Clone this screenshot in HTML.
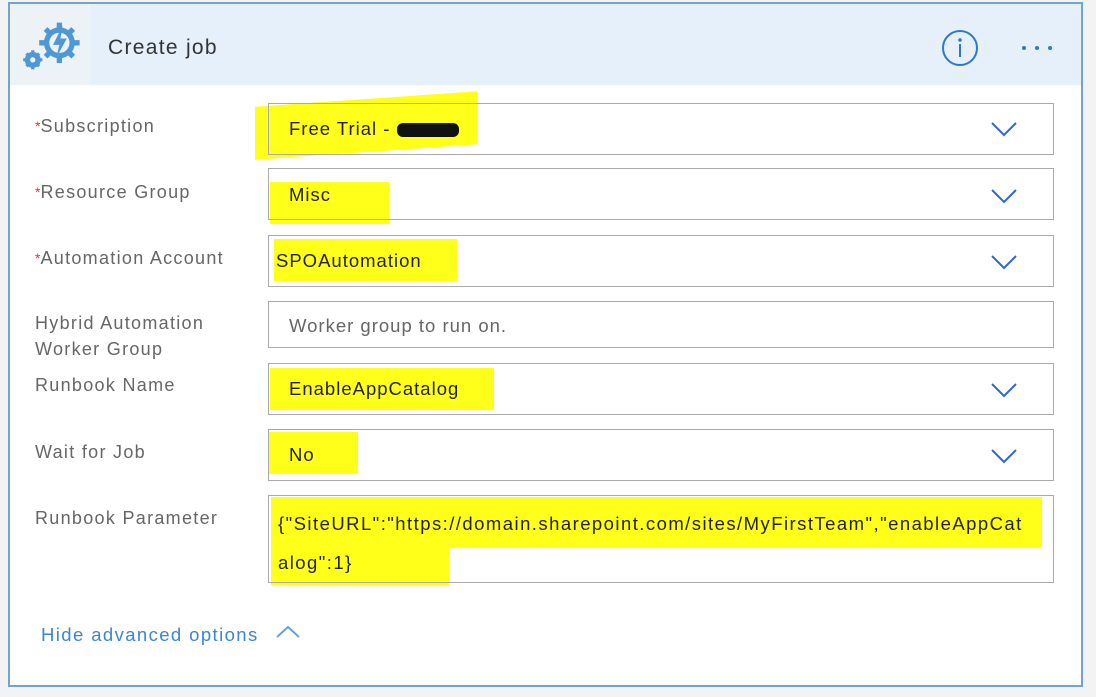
<!DOCTYPE html>
<html><head><style>
body{margin:0;width:1096px;height:697px;background:#f3f3f3;font-family:"Liberation Sans",sans-serif;position:relative;overflow:hidden}
.card{position:absolute;left:8px;top:2px;width:1071px;height:681px;border:2px solid #6fa4d6;background:#fff}
.hdr{position:absolute;left:0;top:0;width:1071px;height:81px;background:#e5f0fa}
.ic{position:absolute;left:0;top:0;width:80px;height:81px;background:#edf2f7}
.a{position:absolute}
.lab{position:absolute;left:25px;font-size:18px;letter-spacing:1.3px;color:#666;line-height:26px}
.req{color:#d33;font-size:14px;vertical-align:top;letter-spacing:0}
.box{position:absolute;left:258px;width:784px;border:1px solid #aaa;background:transparent}
.hl{position:absolute;background:#ffff1a}
.t{position:absolute;font-size:18.5px;letter-spacing:1px;color:#222;white-space:nowrap}
.chev{position:absolute;left:980px;width:28px;height:16px}
</style></head><body>
<div class="card">
 <div class="hdr"></div>
 <div class="ic"></div>
 <svg class="a" style="left:10px;top:14px" width="66" height="56" viewBox="0 0 62 50">
  <g fill="none" stroke="#4f98d6" stroke-width="5">
   <circle cx="37" cy="22" r="12"/>
   <circle cx="12" cy="38" r="5"/>
  </g>
  <g stroke="#4f98d6" stroke-width="5" stroke-linecap="butt">
   <path d="M37 3v5M37 36v5M18 22h5M51 22h5M24 9l3 3M47 32l3 3M50 9l-3 3M24 35l3-3"/>
   <path d="M12 29v3M12 44v3M3 38h3M18 38h3M6 32l2 2M16 42l2 2M18 32l-2 2M6 44l2-2" stroke-width="3"/>
  </g>
  <path d="M40 6l-9 18h6l-3 12 10-18h-6z" fill="#4f98d6"/>
 </svg>
 <div class="t" style="left:98px;top:32px;font-size:21px;letter-spacing:1.3px;color:#333">Create job</div>
 <svg class="a" style="left:930px;top:24px" width="40" height="40"><circle cx="20" cy="20" r="17" fill="none" stroke="#2f78c9" stroke-width="2"/><circle cx="20" cy="12" r="1.8" fill="#2f78c9"/><rect x="19" y="16" width="2" height="13" fill="#2f78c9"/></svg>
 <svg class="a" style="left:1010px;top:40px" width="40" height="8"><circle cx="4" cy="4" r="2" fill="#2f78c9"/><circle cx="17" cy="4" r="2" fill="#2f78c9"/><circle cx="30" cy="4" r="2" fill="#2f78c9"/></svg>

 <div class="hl" style="left:245px;top:95px;width:222px;height:53px;transform:skewY(-4deg)"></div>
 <div class="hl" style="left:260px;top:178px;width:119px;height:42px"></div>
 <div class="hl" style="left:264px;top:235px;width:183px;height:42px"></div>
 <div class="hl" style="left:260px;top:364px;width:224px;height:42px"></div>
 <div class="hl" style="left:258px;top:428px;width:90px;height:42px"></div>
 <div class="hl" style="left:261px;top:493px;width:771px;height:50px"></div>
 <div class="hl" style="left:261px;top:541px;width:178px;height:40px"></div>

 <div class="lab" style="top:109px"><span class="req">*</span>Subscription</div>
 <div class="box" style="top:99px;height:50px"></div>
 <div class="t" style="left:279px;top:114px">Free Trial - <span style="background:#111;border-radius:6px;display:inline-block;width:62px;height:14px;vertical-align:middle"></span></div>
 <svg class="chev" style="top:117px"><path d="M2 2l12 12 12-12" fill="none" stroke="#2f66d0" stroke-width="2"/></svg>

 <div class="lab" style="top:175px"><span class="req">*</span>Resource Group</div>
 <div class="box" style="top:164px;height:50px"></div>
 <div class="t" style="left:279px;top:180px">Misc</div>
 <svg class="chev" style="top:184px"><path d="M2 2l12 12 12-12" fill="none" stroke="#2f66d0" stroke-width="2"/></svg>

 <div class="lab" style="top:241px"><span class="req">*</span>Automation Account</div>
 <div class="box" style="top:231px;height:50px"></div>
 <div class="t" style="left:266px;top:246px">SPOAutomation</div>
 <svg class="chev" style="top:250px"><path d="M2 2l12 12 12-12" fill="none" stroke="#2f66d0" stroke-width="2"/></svg>

 <div class="lab" style="top:306px">Hybrid Automation<br>Worker Group</div>
 <div class="box" style="top:297px;height:45px"></div>
 <div class="t" style="left:279px;top:311px;color:#666">Worker group to run on.</div>

 <div class="lab" style="top:368px">Runbook Name</div>
 <div class="box" style="top:359px;height:50px"></div>
 <div class="t" style="left:279px;top:374px">EnableAppCatalog</div>
 <svg class="chev" style="top:378px"><path d="M2 2l12 12 12-12" fill="none" stroke="#2f66d0" stroke-width="2"/></svg>

 <div class="lab" style="top:435px">Wait for Job</div>
 <div class="box" style="top:425px;height:50px"></div>
 <div class="t" style="left:279px;top:440px">No</div>
 <svg class="chev" style="top:444px"><path d="M2 2l12 12 12-12" fill="none" stroke="#2f66d0" stroke-width="2"/></svg>

 <div class="lab" style="top:501px">Runbook Parameter</div>
 <div class="box" style="top:491px;height:86px"></div>
 <div class="t" style="left:268px;top:509px;font-size:18.5px;letter-spacing:1.45px">{"SiteURL":"https://domain.sharepoint.com/sites/MyFirstTeam","enableAppCat</div>
 <div class="t" style="left:268px;top:548px;font-size:18.5px;letter-spacing:1.45px">alog":1}</div>

 <div class="t" style="left:31px;top:620px;color:#3b86d0;font-size:18.5px;letter-spacing:1.4px">Hide advanced options</div>
 <svg class="a" style="left:265px;top:620px" width="26" height="16"><path d="M2 13l11-10 11 10" fill="none" stroke="#6aa0d8" stroke-width="2"/></svg>
</div>
</body></html>
